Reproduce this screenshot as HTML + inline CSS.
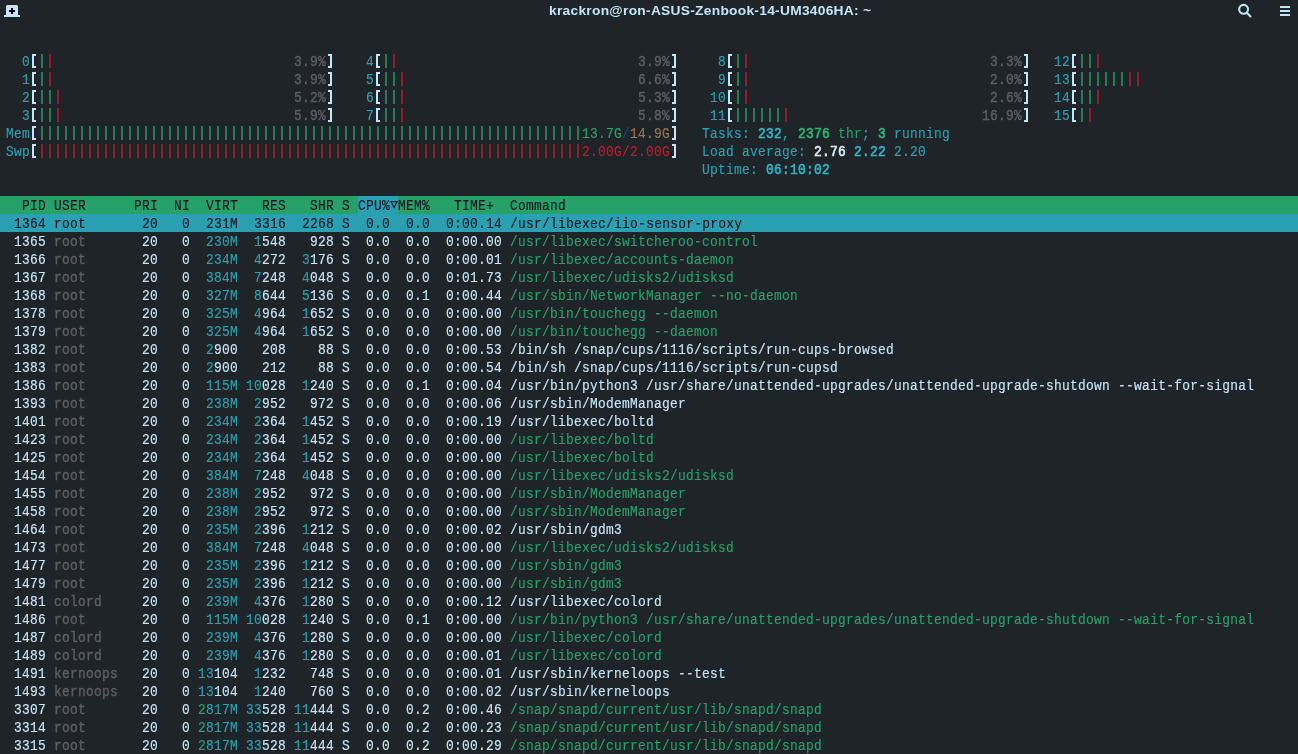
<!DOCTYPE html><html><head><meta charset="utf-8"><style>
html,body{margin:0;padding:0;}
body{width:1298px;height:754px;overflow:hidden;background:#1f2428;position:relative;}
.r{position:absolute;left:0;width:1298px;height:18px;}
.t{position:absolute;top:0;height:18px;line-height:18px;white-space:pre;font-family:"Liberation Mono",monospace;font-size:14px;letter-spacing:0.296px;transform:scaleX(0.92);transform-origin:0 0;-webkit-text-stroke-width:0.15px;}
.b{-webkit-text-stroke-width:0.6px;}
i{position:absolute;display:block;}
.g{-webkit-text-stroke-width:0.4px;}
.title{position:absolute;left:549px;top:1px;height:20px;line-height:20px;font-family:"Liberation Sans",sans-serif;font-weight:bold;font-size:13px;letter-spacing:0.25px;transform:scaleX(1.06);transform-origin:0 0;color:#c4e5f8;white-space:pre;}

</style></head><body><div style="position:absolute;left:0;top:0;width:1298px;height:754px;will-change:transform">
<svg style="position:absolute;left:0;top:0" width="24" height="24" viewBox="0 0 24 24">
<path d="M7.5 5 h9 a1.5 1.5 0 0 1 1.5 1.5 v8.5 h2 v2 h-16 v-2 h2 v-8.5 a1.5 1.5 0 0 1 1.5 -1.5 z" fill="#c4e5f8"/>
<path d="M11 8 h2 v2 h2 v2 h-2 v2 h-2 v-2 h-2 v-2 h2 z" fill="#000"/>
</svg>
<div class="title">krackron@ron-ASUS-Zenbook-14-UM3406HA: ~</div>
<svg style="position:absolute;left:1228px;top:0" width="30" height="24" viewBox="0 0 30 24">
<circle cx="15.6" cy="9.3" r="4.45" fill="none" stroke="#c4e5f8" stroke-width="2.1"/>
<line x1="18.6" y1="12.5" x2="23" y2="17" stroke="#c4e5f8" stroke-width="2.1"/>
</svg>
<svg style="position:absolute;left:1270px;top:0" width="28" height="24" viewBox="0 0 28 24">
<rect x="10" y="6" width="10" height="2" fill="#c4e5f8"/>
<rect x="10" y="10" width="10" height="2" fill="#c4e5f8"/>
<rect x="10" y="14" width="10" height="2" fill="#c4e5f8"/>
</svg>
<div class="r" style="top:52px;">
<i style="left:32px;top:2px;width:2px;height:14px;background:#c4e5f8"></i><i style="left:32px;top:2px;width:4px;height:2px;background:#c4e5f8"></i><i style="left:32px;top:14px;width:4px;height:2px;background:#c4e5f8"></i>
<i style="left:41px;top:2px;width:2px;height:14px;background:#247c55"></i>
<i style="left:49px;top:2px;width:2px;height:14px;background:#931e28"></i>
<i style="left:330px;top:2px;width:2px;height:14px;background:#c4e5f8"></i><i style="left:328px;top:2px;width:4px;height:2px;background:#c4e5f8"></i><i style="left:328px;top:14px;width:4px;height:2px;background:#c4e5f8"></i>
<i style="left:376px;top:2px;width:2px;height:14px;background:#c4e5f8"></i><i style="left:376px;top:2px;width:4px;height:2px;background:#c4e5f8"></i><i style="left:376px;top:14px;width:4px;height:2px;background:#c4e5f8"></i>
<i style="left:385px;top:2px;width:2px;height:14px;background:#247c55"></i>
<i style="left:393px;top:2px;width:2px;height:14px;background:#931e28"></i>
<i style="left:674px;top:2px;width:2px;height:14px;background:#c4e5f8"></i><i style="left:672px;top:2px;width:4px;height:2px;background:#c4e5f8"></i><i style="left:672px;top:14px;width:4px;height:2px;background:#c4e5f8"></i>
<i style="left:728px;top:2px;width:2px;height:14px;background:#c4e5f8"></i><i style="left:728px;top:2px;width:4px;height:2px;background:#c4e5f8"></i><i style="left:728px;top:14px;width:4px;height:2px;background:#c4e5f8"></i>
<i style="left:737px;top:2px;width:2px;height:14px;background:#247c55"></i>
<i style="left:745px;top:2px;width:2px;height:14px;background:#931e28"></i>
<i style="left:1026px;top:2px;width:2px;height:14px;background:#c4e5f8"></i><i style="left:1024px;top:2px;width:4px;height:2px;background:#c4e5f8"></i><i style="left:1024px;top:14px;width:4px;height:2px;background:#c4e5f8"></i>
<i style="left:1072px;top:2px;width:2px;height:14px;background:#c4e5f8"></i><i style="left:1072px;top:2px;width:4px;height:2px;background:#c4e5f8"></i><i style="left:1072px;top:14px;width:4px;height:2px;background:#c4e5f8"></i>
<i style="left:1081px;top:2px;width:2px;height:14px;background:#247c55"></i>
<i style="left:1089px;top:2px;width:2px;height:14px;background:#247c55"></i>
<i style="left:1097px;top:2px;width:2px;height:14px;background:#931e28"></i>
<div class="t" style="left:22px;top:1px;color:#2aa1b3">0</div>
<div class="t g" style="left:294px;top:1px;color:#5f5d65">3.9%</div>
<div class="t" style="left:366px;top:1px;color:#2aa1b3">4</div>
<div class="t g" style="left:638px;top:1px;color:#5f5d65">3.9%</div>
<div class="t" style="left:718px;top:1px;color:#2aa1b3">8</div>
<div class="t g" style="left:990px;top:1px;color:#5f5d65">3.3%</div>
<div class="t" style="left:1054px;top:1px;color:#2aa1b3">12</div>
</div>
<div class="r" style="top:70px;">
<i style="left:32px;top:2px;width:2px;height:14px;background:#c4e5f8"></i><i style="left:32px;top:2px;width:4px;height:2px;background:#c4e5f8"></i><i style="left:32px;top:14px;width:4px;height:2px;background:#c4e5f8"></i>
<i style="left:41px;top:2px;width:2px;height:14px;background:#247c55"></i>
<i style="left:49px;top:2px;width:2px;height:14px;background:#931e28"></i>
<i style="left:330px;top:2px;width:2px;height:14px;background:#c4e5f8"></i><i style="left:328px;top:2px;width:4px;height:2px;background:#c4e5f8"></i><i style="left:328px;top:14px;width:4px;height:2px;background:#c4e5f8"></i>
<i style="left:376px;top:2px;width:2px;height:14px;background:#c4e5f8"></i><i style="left:376px;top:2px;width:4px;height:2px;background:#c4e5f8"></i><i style="left:376px;top:14px;width:4px;height:2px;background:#c4e5f8"></i>
<i style="left:385px;top:2px;width:2px;height:14px;background:#247c55"></i>
<i style="left:393px;top:2px;width:2px;height:14px;background:#247c55"></i>
<i style="left:401px;top:2px;width:2px;height:14px;background:#931e28"></i>
<i style="left:674px;top:2px;width:2px;height:14px;background:#c4e5f8"></i><i style="left:672px;top:2px;width:4px;height:2px;background:#c4e5f8"></i><i style="left:672px;top:14px;width:4px;height:2px;background:#c4e5f8"></i>
<i style="left:728px;top:2px;width:2px;height:14px;background:#c4e5f8"></i><i style="left:728px;top:2px;width:4px;height:2px;background:#c4e5f8"></i><i style="left:728px;top:14px;width:4px;height:2px;background:#c4e5f8"></i>
<i style="left:737px;top:2px;width:2px;height:14px;background:#247c55"></i>
<i style="left:745px;top:2px;width:2px;height:14px;background:#931e28"></i>
<i style="left:1026px;top:2px;width:2px;height:14px;background:#c4e5f8"></i><i style="left:1024px;top:2px;width:4px;height:2px;background:#c4e5f8"></i><i style="left:1024px;top:14px;width:4px;height:2px;background:#c4e5f8"></i>
<i style="left:1072px;top:2px;width:2px;height:14px;background:#c4e5f8"></i><i style="left:1072px;top:2px;width:4px;height:2px;background:#c4e5f8"></i><i style="left:1072px;top:14px;width:4px;height:2px;background:#c4e5f8"></i>
<i style="left:1081px;top:2px;width:2px;height:14px;background:#247c55"></i>
<i style="left:1089px;top:2px;width:2px;height:14px;background:#247c55"></i>
<i style="left:1097px;top:2px;width:2px;height:14px;background:#247c55"></i>
<i style="left:1105px;top:2px;width:2px;height:14px;background:#247c55"></i>
<i style="left:1113px;top:2px;width:2px;height:14px;background:#247c55"></i>
<i style="left:1121px;top:2px;width:2px;height:14px;background:#247c55"></i>
<i style="left:1129px;top:2px;width:2px;height:14px;background:#931e28"></i>
<i style="left:1137px;top:2px;width:2px;height:14px;background:#931e28"></i>
<div class="t" style="left:22px;top:1px;color:#2aa1b3">1</div>
<div class="t g" style="left:294px;top:1px;color:#5f5d65">3.9%</div>
<div class="t" style="left:366px;top:1px;color:#2aa1b3">5</div>
<div class="t g" style="left:638px;top:1px;color:#5f5d65">6.6%</div>
<div class="t" style="left:718px;top:1px;color:#2aa1b3">9</div>
<div class="t g" style="left:990px;top:1px;color:#5f5d65">2.0%</div>
<div class="t" style="left:1054px;top:1px;color:#2aa1b3">13</div>
</div>
<div class="r" style="top:88px;">
<i style="left:32px;top:2px;width:2px;height:14px;background:#c4e5f8"></i><i style="left:32px;top:2px;width:4px;height:2px;background:#c4e5f8"></i><i style="left:32px;top:14px;width:4px;height:2px;background:#c4e5f8"></i>
<i style="left:41px;top:2px;width:2px;height:14px;background:#247c55"></i>
<i style="left:49px;top:2px;width:2px;height:14px;background:#247c55"></i>
<i style="left:57px;top:2px;width:2px;height:14px;background:#931e28"></i>
<i style="left:330px;top:2px;width:2px;height:14px;background:#c4e5f8"></i><i style="left:328px;top:2px;width:4px;height:2px;background:#c4e5f8"></i><i style="left:328px;top:14px;width:4px;height:2px;background:#c4e5f8"></i>
<i style="left:376px;top:2px;width:2px;height:14px;background:#c4e5f8"></i><i style="left:376px;top:2px;width:4px;height:2px;background:#c4e5f8"></i><i style="left:376px;top:14px;width:4px;height:2px;background:#c4e5f8"></i>
<i style="left:385px;top:2px;width:2px;height:14px;background:#247c55"></i>
<i style="left:393px;top:2px;width:2px;height:14px;background:#247c55"></i>
<i style="left:401px;top:2px;width:2px;height:14px;background:#931e28"></i>
<i style="left:674px;top:2px;width:2px;height:14px;background:#c4e5f8"></i><i style="left:672px;top:2px;width:4px;height:2px;background:#c4e5f8"></i><i style="left:672px;top:14px;width:4px;height:2px;background:#c4e5f8"></i>
<i style="left:728px;top:2px;width:2px;height:14px;background:#c4e5f8"></i><i style="left:728px;top:2px;width:4px;height:2px;background:#c4e5f8"></i><i style="left:728px;top:14px;width:4px;height:2px;background:#c4e5f8"></i>
<i style="left:737px;top:2px;width:2px;height:14px;background:#247c55"></i>
<i style="left:745px;top:2px;width:2px;height:14px;background:#931e28"></i>
<i style="left:1026px;top:2px;width:2px;height:14px;background:#c4e5f8"></i><i style="left:1024px;top:2px;width:4px;height:2px;background:#c4e5f8"></i><i style="left:1024px;top:14px;width:4px;height:2px;background:#c4e5f8"></i>
<i style="left:1072px;top:2px;width:2px;height:14px;background:#c4e5f8"></i><i style="left:1072px;top:2px;width:4px;height:2px;background:#c4e5f8"></i><i style="left:1072px;top:14px;width:4px;height:2px;background:#c4e5f8"></i>
<i style="left:1081px;top:2px;width:2px;height:14px;background:#247c55"></i>
<i style="left:1089px;top:2px;width:2px;height:14px;background:#247c55"></i>
<i style="left:1097px;top:2px;width:2px;height:14px;background:#931e28"></i>
<div class="t" style="left:22px;top:1px;color:#2aa1b3">2</div>
<div class="t g" style="left:294px;top:1px;color:#5f5d65">5.2%</div>
<div class="t" style="left:366px;top:1px;color:#2aa1b3">6</div>
<div class="t g" style="left:638px;top:1px;color:#5f5d65">5.3%</div>
<div class="t" style="left:710px;top:1px;color:#2aa1b3">10</div>
<div class="t g" style="left:990px;top:1px;color:#5f5d65">2.6%</div>
<div class="t" style="left:1054px;top:1px;color:#2aa1b3">14</div>
</div>
<div class="r" style="top:106px;">
<i style="left:32px;top:2px;width:2px;height:14px;background:#c4e5f8"></i><i style="left:32px;top:2px;width:4px;height:2px;background:#c4e5f8"></i><i style="left:32px;top:14px;width:4px;height:2px;background:#c4e5f8"></i>
<i style="left:41px;top:2px;width:2px;height:14px;background:#247c55"></i>
<i style="left:49px;top:2px;width:2px;height:14px;background:#247c55"></i>
<i style="left:57px;top:2px;width:2px;height:14px;background:#931e28"></i>
<i style="left:330px;top:2px;width:2px;height:14px;background:#c4e5f8"></i><i style="left:328px;top:2px;width:4px;height:2px;background:#c4e5f8"></i><i style="left:328px;top:14px;width:4px;height:2px;background:#c4e5f8"></i>
<i style="left:376px;top:2px;width:2px;height:14px;background:#c4e5f8"></i><i style="left:376px;top:2px;width:4px;height:2px;background:#c4e5f8"></i><i style="left:376px;top:14px;width:4px;height:2px;background:#c4e5f8"></i>
<i style="left:385px;top:2px;width:2px;height:14px;background:#247c55"></i>
<i style="left:393px;top:2px;width:2px;height:14px;background:#247c55"></i>
<i style="left:401px;top:2px;width:2px;height:14px;background:#931e28"></i>
<i style="left:674px;top:2px;width:2px;height:14px;background:#c4e5f8"></i><i style="left:672px;top:2px;width:4px;height:2px;background:#c4e5f8"></i><i style="left:672px;top:14px;width:4px;height:2px;background:#c4e5f8"></i>
<i style="left:728px;top:2px;width:2px;height:14px;background:#c4e5f8"></i><i style="left:728px;top:2px;width:4px;height:2px;background:#c4e5f8"></i><i style="left:728px;top:14px;width:4px;height:2px;background:#c4e5f8"></i>
<i style="left:737px;top:2px;width:2px;height:14px;background:#247c55"></i>
<i style="left:745px;top:2px;width:2px;height:14px;background:#247c55"></i>
<i style="left:753px;top:2px;width:2px;height:14px;background:#247c55"></i>
<i style="left:761px;top:2px;width:2px;height:14px;background:#247c55"></i>
<i style="left:769px;top:2px;width:2px;height:14px;background:#247c55"></i>
<i style="left:777px;top:2px;width:2px;height:14px;background:#247c55"></i>
<i style="left:785px;top:2px;width:2px;height:14px;background:#931e28"></i>
<i style="left:1026px;top:2px;width:2px;height:14px;background:#c4e5f8"></i><i style="left:1024px;top:2px;width:4px;height:2px;background:#c4e5f8"></i><i style="left:1024px;top:14px;width:4px;height:2px;background:#c4e5f8"></i>
<i style="left:1072px;top:2px;width:2px;height:14px;background:#c4e5f8"></i><i style="left:1072px;top:2px;width:4px;height:2px;background:#c4e5f8"></i><i style="left:1072px;top:14px;width:4px;height:2px;background:#c4e5f8"></i>
<i style="left:1081px;top:2px;width:2px;height:14px;background:#247c55"></i>
<i style="left:1089px;top:2px;width:2px;height:14px;background:#931e28"></i>
<div class="t" style="left:22px;top:1px;color:#2aa1b3">3</div>
<div class="t g" style="left:294px;top:1px;color:#5f5d65">5.9%</div>
<div class="t" style="left:366px;top:1px;color:#2aa1b3">7</div>
<div class="t g" style="left:638px;top:1px;color:#5f5d65">5.8%</div>
<div class="t" style="left:710px;top:1px;color:#2aa1b3">11</div>
<div class="t g" style="left:982px;top:1px;color:#5f5d65">16.9%</div>
<div class="t" style="left:1054px;top:1px;color:#2aa1b3">15</div>
</div>
<div class="r" style="top:124px;">
<i style="left:32px;top:2px;width:2px;height:14px;background:#c4e5f8"></i><i style="left:32px;top:2px;width:4px;height:2px;background:#c4e5f8"></i><i style="left:32px;top:14px;width:4px;height:2px;background:#c4e5f8"></i>
<i style="left:41px;top:2px;width:2px;height:14px;background:#247c55"></i>
<i style="left:49px;top:2px;width:2px;height:14px;background:#247c55"></i>
<i style="left:57px;top:2px;width:2px;height:14px;background:#247c55"></i>
<i style="left:65px;top:2px;width:2px;height:14px;background:#247c55"></i>
<i style="left:73px;top:2px;width:2px;height:14px;background:#247c55"></i>
<i style="left:81px;top:2px;width:2px;height:14px;background:#247c55"></i>
<i style="left:89px;top:2px;width:2px;height:14px;background:#247c55"></i>
<i style="left:97px;top:2px;width:2px;height:14px;background:#247c55"></i>
<i style="left:105px;top:2px;width:2px;height:14px;background:#247c55"></i>
<i style="left:113px;top:2px;width:2px;height:14px;background:#247c55"></i>
<i style="left:121px;top:2px;width:2px;height:14px;background:#247c55"></i>
<i style="left:129px;top:2px;width:2px;height:14px;background:#247c55"></i>
<i style="left:137px;top:2px;width:2px;height:14px;background:#247c55"></i>
<i style="left:145px;top:2px;width:2px;height:14px;background:#247c55"></i>
<i style="left:153px;top:2px;width:2px;height:14px;background:#247c55"></i>
<i style="left:161px;top:2px;width:2px;height:14px;background:#247c55"></i>
<i style="left:169px;top:2px;width:2px;height:14px;background:#247c55"></i>
<i style="left:177px;top:2px;width:2px;height:14px;background:#247c55"></i>
<i style="left:185px;top:2px;width:2px;height:14px;background:#247c55"></i>
<i style="left:193px;top:2px;width:2px;height:14px;background:#247c55"></i>
<i style="left:201px;top:2px;width:2px;height:14px;background:#247c55"></i>
<i style="left:209px;top:2px;width:2px;height:14px;background:#247c55"></i>
<i style="left:217px;top:2px;width:2px;height:14px;background:#247c55"></i>
<i style="left:225px;top:2px;width:2px;height:14px;background:#247c55"></i>
<i style="left:233px;top:2px;width:2px;height:14px;background:#247c55"></i>
<i style="left:241px;top:2px;width:2px;height:14px;background:#247c55"></i>
<i style="left:249px;top:2px;width:2px;height:14px;background:#247c55"></i>
<i style="left:257px;top:2px;width:2px;height:14px;background:#247c55"></i>
<i style="left:265px;top:2px;width:2px;height:14px;background:#247c55"></i>
<i style="left:273px;top:2px;width:2px;height:14px;background:#247c55"></i>
<i style="left:281px;top:2px;width:2px;height:14px;background:#247c55"></i>
<i style="left:289px;top:2px;width:2px;height:14px;background:#247c55"></i>
<i style="left:297px;top:2px;width:2px;height:14px;background:#247c55"></i>
<i style="left:305px;top:2px;width:2px;height:14px;background:#247c55"></i>
<i style="left:313px;top:2px;width:2px;height:14px;background:#247c55"></i>
<i style="left:321px;top:2px;width:2px;height:14px;background:#247c55"></i>
<i style="left:329px;top:2px;width:2px;height:14px;background:#247c55"></i>
<i style="left:337px;top:2px;width:2px;height:14px;background:#247c55"></i>
<i style="left:345px;top:2px;width:2px;height:14px;background:#247c55"></i>
<i style="left:353px;top:2px;width:2px;height:14px;background:#247c55"></i>
<i style="left:361px;top:2px;width:2px;height:14px;background:#247c55"></i>
<i style="left:369px;top:2px;width:2px;height:14px;background:#247c55"></i>
<i style="left:377px;top:2px;width:2px;height:14px;background:#247c55"></i>
<i style="left:385px;top:2px;width:2px;height:14px;background:#247c55"></i>
<i style="left:393px;top:2px;width:2px;height:14px;background:#247c55"></i>
<i style="left:401px;top:2px;width:2px;height:14px;background:#247c55"></i>
<i style="left:409px;top:2px;width:2px;height:14px;background:#247c55"></i>
<i style="left:417px;top:2px;width:2px;height:14px;background:#247c55"></i>
<i style="left:425px;top:2px;width:2px;height:14px;background:#247c55"></i>
<i style="left:433px;top:2px;width:2px;height:14px;background:#247c55"></i>
<i style="left:441px;top:2px;width:2px;height:14px;background:#247c55"></i>
<i style="left:449px;top:2px;width:2px;height:14px;background:#247c55"></i>
<i style="left:457px;top:2px;width:2px;height:14px;background:#247c55"></i>
<i style="left:465px;top:2px;width:2px;height:14px;background:#247c55"></i>
<i style="left:473px;top:2px;width:2px;height:14px;background:#247c55"></i>
<i style="left:481px;top:2px;width:2px;height:14px;background:#247c55"></i>
<i style="left:489px;top:2px;width:2px;height:14px;background:#247c55"></i>
<i style="left:497px;top:2px;width:2px;height:14px;background:#247c55"></i>
<i style="left:505px;top:2px;width:2px;height:14px;background:#247c55"></i>
<i style="left:513px;top:2px;width:2px;height:14px;background:#247c55"></i>
<i style="left:521px;top:2px;width:2px;height:14px;background:#247c55"></i>
<i style="left:529px;top:2px;width:2px;height:14px;background:#247c55"></i>
<i style="left:537px;top:2px;width:2px;height:14px;background:#247c55"></i>
<i style="left:545px;top:2px;width:2px;height:14px;background:#247c55"></i>
<i style="left:553px;top:2px;width:2px;height:14px;background:#247c55"></i>
<i style="left:561px;top:2px;width:2px;height:14px;background:#247c55"></i>
<i style="left:569px;top:2px;width:2px;height:14px;background:#247c55"></i>
<i style="left:577px;top:2px;width:2px;height:14px;background:#247c55"></i>
<i style="left:674px;top:2px;width:2px;height:14px;background:#c4e5f8"></i><i style="left:672px;top:2px;width:4px;height:2px;background:#c4e5f8"></i><i style="left:672px;top:14px;width:4px;height:2px;background:#c4e5f8"></i>
<div class="t" style="left:6px;top:1px;color:#2aa1b3">Mem</div>
<div class="t" style="left:582px;top:1px;color:#26a269">13.7G</div>
<div class="t" style="left:622px;top:1px;color:#12488b">/</div>
<div class="t" style="left:630px;top:1px;color:#a2734c">14.9G</div>
<div class="t" style="left:702px;top:1px;color:#2aa1b3">Tasks: </div>
<div class="t b" style="left:758px;top:1px;color:#30b4c8">232</div>
<div class="t" style="left:782px;top:1px;color:#2aa1b3">, </div>
<div class="t b" style="left:798px;top:1px;color:#2cb872">2376</div>
<div class="t" style="left:830px;top:1px;color:#26a269"> thr</div>
<div class="t" style="left:862px;top:1px;color:#2aa1b3">; </div>
<div class="t b" style="left:878px;top:1px;color:#2cb872">3</div>
<div class="t" style="left:886px;top:1px;color:#2aa1b3"> running</div>
</div>
<div class="r" style="top:142px;">
<i style="left:32px;top:2px;width:2px;height:14px;background:#c4e5f8"></i><i style="left:32px;top:2px;width:4px;height:2px;background:#c4e5f8"></i><i style="left:32px;top:14px;width:4px;height:2px;background:#c4e5f8"></i>
<i style="left:41px;top:2px;width:2px;height:14px;background:#931e28"></i>
<i style="left:49px;top:2px;width:2px;height:14px;background:#931e28"></i>
<i style="left:57px;top:2px;width:2px;height:14px;background:#931e28"></i>
<i style="left:65px;top:2px;width:2px;height:14px;background:#931e28"></i>
<i style="left:73px;top:2px;width:2px;height:14px;background:#931e28"></i>
<i style="left:81px;top:2px;width:2px;height:14px;background:#931e28"></i>
<i style="left:89px;top:2px;width:2px;height:14px;background:#931e28"></i>
<i style="left:97px;top:2px;width:2px;height:14px;background:#931e28"></i>
<i style="left:105px;top:2px;width:2px;height:14px;background:#931e28"></i>
<i style="left:113px;top:2px;width:2px;height:14px;background:#931e28"></i>
<i style="left:121px;top:2px;width:2px;height:14px;background:#931e28"></i>
<i style="left:129px;top:2px;width:2px;height:14px;background:#931e28"></i>
<i style="left:137px;top:2px;width:2px;height:14px;background:#931e28"></i>
<i style="left:145px;top:2px;width:2px;height:14px;background:#931e28"></i>
<i style="left:153px;top:2px;width:2px;height:14px;background:#931e28"></i>
<i style="left:161px;top:2px;width:2px;height:14px;background:#931e28"></i>
<i style="left:169px;top:2px;width:2px;height:14px;background:#931e28"></i>
<i style="left:177px;top:2px;width:2px;height:14px;background:#931e28"></i>
<i style="left:185px;top:2px;width:2px;height:14px;background:#931e28"></i>
<i style="left:193px;top:2px;width:2px;height:14px;background:#931e28"></i>
<i style="left:201px;top:2px;width:2px;height:14px;background:#931e28"></i>
<i style="left:209px;top:2px;width:2px;height:14px;background:#931e28"></i>
<i style="left:217px;top:2px;width:2px;height:14px;background:#931e28"></i>
<i style="left:225px;top:2px;width:2px;height:14px;background:#931e28"></i>
<i style="left:233px;top:2px;width:2px;height:14px;background:#931e28"></i>
<i style="left:241px;top:2px;width:2px;height:14px;background:#931e28"></i>
<i style="left:249px;top:2px;width:2px;height:14px;background:#931e28"></i>
<i style="left:257px;top:2px;width:2px;height:14px;background:#931e28"></i>
<i style="left:265px;top:2px;width:2px;height:14px;background:#931e28"></i>
<i style="left:273px;top:2px;width:2px;height:14px;background:#931e28"></i>
<i style="left:281px;top:2px;width:2px;height:14px;background:#931e28"></i>
<i style="left:289px;top:2px;width:2px;height:14px;background:#931e28"></i>
<i style="left:297px;top:2px;width:2px;height:14px;background:#931e28"></i>
<i style="left:305px;top:2px;width:2px;height:14px;background:#931e28"></i>
<i style="left:313px;top:2px;width:2px;height:14px;background:#931e28"></i>
<i style="left:321px;top:2px;width:2px;height:14px;background:#931e28"></i>
<i style="left:329px;top:2px;width:2px;height:14px;background:#931e28"></i>
<i style="left:337px;top:2px;width:2px;height:14px;background:#931e28"></i>
<i style="left:345px;top:2px;width:2px;height:14px;background:#931e28"></i>
<i style="left:353px;top:2px;width:2px;height:14px;background:#931e28"></i>
<i style="left:361px;top:2px;width:2px;height:14px;background:#931e28"></i>
<i style="left:369px;top:2px;width:2px;height:14px;background:#931e28"></i>
<i style="left:377px;top:2px;width:2px;height:14px;background:#931e28"></i>
<i style="left:385px;top:2px;width:2px;height:14px;background:#931e28"></i>
<i style="left:393px;top:2px;width:2px;height:14px;background:#931e28"></i>
<i style="left:401px;top:2px;width:2px;height:14px;background:#931e28"></i>
<i style="left:409px;top:2px;width:2px;height:14px;background:#931e28"></i>
<i style="left:417px;top:2px;width:2px;height:14px;background:#931e28"></i>
<i style="left:425px;top:2px;width:2px;height:14px;background:#931e28"></i>
<i style="left:433px;top:2px;width:2px;height:14px;background:#931e28"></i>
<i style="left:441px;top:2px;width:2px;height:14px;background:#931e28"></i>
<i style="left:449px;top:2px;width:2px;height:14px;background:#931e28"></i>
<i style="left:457px;top:2px;width:2px;height:14px;background:#931e28"></i>
<i style="left:465px;top:2px;width:2px;height:14px;background:#931e28"></i>
<i style="left:473px;top:2px;width:2px;height:14px;background:#931e28"></i>
<i style="left:481px;top:2px;width:2px;height:14px;background:#931e28"></i>
<i style="left:489px;top:2px;width:2px;height:14px;background:#931e28"></i>
<i style="left:497px;top:2px;width:2px;height:14px;background:#931e28"></i>
<i style="left:505px;top:2px;width:2px;height:14px;background:#931e28"></i>
<i style="left:513px;top:2px;width:2px;height:14px;background:#931e28"></i>
<i style="left:521px;top:2px;width:2px;height:14px;background:#931e28"></i>
<i style="left:529px;top:2px;width:2px;height:14px;background:#931e28"></i>
<i style="left:537px;top:2px;width:2px;height:14px;background:#931e28"></i>
<i style="left:545px;top:2px;width:2px;height:14px;background:#931e28"></i>
<i style="left:553px;top:2px;width:2px;height:14px;background:#931e28"></i>
<i style="left:561px;top:2px;width:2px;height:14px;background:#931e28"></i>
<i style="left:569px;top:2px;width:2px;height:14px;background:#931e28"></i>
<i style="left:577px;top:2px;width:2px;height:14px;background:#931e28"></i>
<i style="left:674px;top:2px;width:2px;height:14px;background:#c4e5f8"></i><i style="left:672px;top:2px;width:4px;height:2px;background:#c4e5f8"></i><i style="left:672px;top:14px;width:4px;height:2px;background:#c4e5f8"></i>
<div class="t" style="left:6px;top:1px;color:#2aa1b3">Swp</div>
<div class="t" style="left:582px;top:1px;color:#c01c28">2.00G/2.00G</div>
<div class="t" style="left:702px;top:1px;color:#2aa1b3">Load average: </div>
<div class="t b" style="left:814px;top:1px;color:#dcf0fb">2.76 </div>
<div class="t b" style="left:854px;top:1px;color:#30b4c8">2.22 </div>
<div class="t" style="left:894px;top:1px;color:#2aa1b3">2.20</div>
</div>
<div class="r" style="top:160px;">
<div class="t" style="left:702px;top:1px;color:#2aa1b3">Uptime: </div>
<div class="t b" style="left:766px;top:1px;color:#30b4c8">06:10:02</div>
</div>
<div class="r" style="top:196px;background:#26a269;">
<div style="position:absolute;left:358px;top:0;width:40px;height:18px;background:#2aa1b3"></div>
<svg style="position:absolute;left:388px;top:3px" width="12" height="12" viewBox="0 0 12 12"><path d="M2.9 2.6 H9.2 L6.05 8.6 Z" fill="none" stroke="#171421" stroke-width="1.1" stroke-linejoin="miter"/></svg>
<div class="t" style="left:6px;top:1px;color:#171421">  PID USER      PRI  NI  VIRT   RES   SHR S </div>
<div class="t" style="left:358px;top:1px;color:#171421">CPU% </div>
<div class="t" style="left:398px;top:1px;color:#171421">MEM%   TIME+  Command</div>
</div>
<div class="r" style="top:214px;background:#2aa1b3;">
<div class="t" style="left:6px;top:1px;color:#171421"> 1364 root       20   0  231M  3316  2268 S  0.0  0.0  0:00.14 /usr/libexec/iio-sensor-proxy</div>
</div>
<div class="r" style="top:232px;">
<div class="t" style="left:6px;top:1px;color:#c4e5f8"> 1365</div>
<div class="t g" style="left:54px;top:1px;color:#5f5d65">root</div>
<div class="t" style="left:134px;top:1px;color:#c4e5f8"> 20</div>
<div class="t" style="left:166px;top:1px;color:#c4e5f8">  0</div>
<div class="t" style="left:206px;top:1px;color:#2aa1b3">230M</div>
<div class="t" style="left:254px;top:1px;color:#2aa1b3">1</div>
<div class="t" style="left:262px;top:1px;color:#c4e5f8">548</div>
<div class="t" style="left:310px;top:1px;color:#c4e5f8">928</div>
<div class="t" style="left:342px;top:1px;color:#c4e5f8">S</div>
<div class="t" style="left:366px;top:1px;color:#c4e5f8">0.0</div>
<div class="t" style="left:406px;top:1px;color:#c4e5f8">0.0</div>
<div class="t" style="left:446px;top:1px;color:#c4e5f8">0:00.00</div>
<div class="t" style="left:510px;top:1px;color:#26a269">/usr/libexec/switcheroo-control</div>
</div>
<div class="r" style="top:250px;">
<div class="t" style="left:6px;top:1px;color:#c4e5f8"> 1366</div>
<div class="t g" style="left:54px;top:1px;color:#5f5d65">root</div>
<div class="t" style="left:134px;top:1px;color:#c4e5f8"> 20</div>
<div class="t" style="left:166px;top:1px;color:#c4e5f8">  0</div>
<div class="t" style="left:206px;top:1px;color:#2aa1b3">234M</div>
<div class="t" style="left:254px;top:1px;color:#2aa1b3">4</div>
<div class="t" style="left:262px;top:1px;color:#c4e5f8">272</div>
<div class="t" style="left:302px;top:1px;color:#2aa1b3">3</div>
<div class="t" style="left:310px;top:1px;color:#c4e5f8">176</div>
<div class="t" style="left:342px;top:1px;color:#c4e5f8">S</div>
<div class="t" style="left:366px;top:1px;color:#c4e5f8">0.0</div>
<div class="t" style="left:406px;top:1px;color:#c4e5f8">0.0</div>
<div class="t" style="left:446px;top:1px;color:#c4e5f8">0:00.01</div>
<div class="t" style="left:510px;top:1px;color:#26a269">/usr/libexec/accounts-daemon</div>
</div>
<div class="r" style="top:268px;">
<div class="t" style="left:6px;top:1px;color:#c4e5f8"> 1367</div>
<div class="t g" style="left:54px;top:1px;color:#5f5d65">root</div>
<div class="t" style="left:134px;top:1px;color:#c4e5f8"> 20</div>
<div class="t" style="left:166px;top:1px;color:#c4e5f8">  0</div>
<div class="t" style="left:206px;top:1px;color:#2aa1b3">384M</div>
<div class="t" style="left:254px;top:1px;color:#2aa1b3">7</div>
<div class="t" style="left:262px;top:1px;color:#c4e5f8">248</div>
<div class="t" style="left:302px;top:1px;color:#2aa1b3">4</div>
<div class="t" style="left:310px;top:1px;color:#c4e5f8">048</div>
<div class="t" style="left:342px;top:1px;color:#c4e5f8">S</div>
<div class="t" style="left:366px;top:1px;color:#c4e5f8">0.0</div>
<div class="t" style="left:406px;top:1px;color:#c4e5f8">0.0</div>
<div class="t" style="left:446px;top:1px;color:#c4e5f8">0:01.73</div>
<div class="t" style="left:510px;top:1px;color:#26a269">/usr/libexec/udisks2/udisksd</div>
</div>
<div class="r" style="top:286px;">
<div class="t" style="left:6px;top:1px;color:#c4e5f8"> 1368</div>
<div class="t g" style="left:54px;top:1px;color:#5f5d65">root</div>
<div class="t" style="left:134px;top:1px;color:#c4e5f8"> 20</div>
<div class="t" style="left:166px;top:1px;color:#c4e5f8">  0</div>
<div class="t" style="left:206px;top:1px;color:#2aa1b3">327M</div>
<div class="t" style="left:254px;top:1px;color:#2aa1b3">8</div>
<div class="t" style="left:262px;top:1px;color:#c4e5f8">644</div>
<div class="t" style="left:302px;top:1px;color:#2aa1b3">5</div>
<div class="t" style="left:310px;top:1px;color:#c4e5f8">136</div>
<div class="t" style="left:342px;top:1px;color:#c4e5f8">S</div>
<div class="t" style="left:366px;top:1px;color:#c4e5f8">0.0</div>
<div class="t" style="left:406px;top:1px;color:#c4e5f8">0.1</div>
<div class="t" style="left:446px;top:1px;color:#c4e5f8">0:00.44</div>
<div class="t" style="left:510px;top:1px;color:#26a269">/usr/sbin/NetworkManager --no-daemon</div>
</div>
<div class="r" style="top:304px;">
<div class="t" style="left:6px;top:1px;color:#c4e5f8"> 1378</div>
<div class="t g" style="left:54px;top:1px;color:#5f5d65">root</div>
<div class="t" style="left:134px;top:1px;color:#c4e5f8"> 20</div>
<div class="t" style="left:166px;top:1px;color:#c4e5f8">  0</div>
<div class="t" style="left:206px;top:1px;color:#2aa1b3">325M</div>
<div class="t" style="left:254px;top:1px;color:#2aa1b3">4</div>
<div class="t" style="left:262px;top:1px;color:#c4e5f8">964</div>
<div class="t" style="left:302px;top:1px;color:#2aa1b3">1</div>
<div class="t" style="left:310px;top:1px;color:#c4e5f8">652</div>
<div class="t" style="left:342px;top:1px;color:#c4e5f8">S</div>
<div class="t" style="left:366px;top:1px;color:#c4e5f8">0.0</div>
<div class="t" style="left:406px;top:1px;color:#c4e5f8">0.0</div>
<div class="t" style="left:446px;top:1px;color:#c4e5f8">0:00.00</div>
<div class="t" style="left:510px;top:1px;color:#26a269">/usr/bin/touchegg --daemon</div>
</div>
<div class="r" style="top:322px;">
<div class="t" style="left:6px;top:1px;color:#c4e5f8"> 1379</div>
<div class="t g" style="left:54px;top:1px;color:#5f5d65">root</div>
<div class="t" style="left:134px;top:1px;color:#c4e5f8"> 20</div>
<div class="t" style="left:166px;top:1px;color:#c4e5f8">  0</div>
<div class="t" style="left:206px;top:1px;color:#2aa1b3">325M</div>
<div class="t" style="left:254px;top:1px;color:#2aa1b3">4</div>
<div class="t" style="left:262px;top:1px;color:#c4e5f8">964</div>
<div class="t" style="left:302px;top:1px;color:#2aa1b3">1</div>
<div class="t" style="left:310px;top:1px;color:#c4e5f8">652</div>
<div class="t" style="left:342px;top:1px;color:#c4e5f8">S</div>
<div class="t" style="left:366px;top:1px;color:#c4e5f8">0.0</div>
<div class="t" style="left:406px;top:1px;color:#c4e5f8">0.0</div>
<div class="t" style="left:446px;top:1px;color:#c4e5f8">0:00.00</div>
<div class="t" style="left:510px;top:1px;color:#26a269">/usr/bin/touchegg --daemon</div>
</div>
<div class="r" style="top:340px;">
<div class="t" style="left:6px;top:1px;color:#c4e5f8"> 1382</div>
<div class="t g" style="left:54px;top:1px;color:#5f5d65">root</div>
<div class="t" style="left:134px;top:1px;color:#c4e5f8"> 20</div>
<div class="t" style="left:166px;top:1px;color:#c4e5f8">  0</div>
<div class="t" style="left:206px;top:1px;color:#2aa1b3">2</div>
<div class="t" style="left:214px;top:1px;color:#c4e5f8">900</div>
<div class="t" style="left:262px;top:1px;color:#c4e5f8">208</div>
<div class="t" style="left:318px;top:1px;color:#c4e5f8">88</div>
<div class="t" style="left:342px;top:1px;color:#c4e5f8">S</div>
<div class="t" style="left:366px;top:1px;color:#c4e5f8">0.0</div>
<div class="t" style="left:406px;top:1px;color:#c4e5f8">0.0</div>
<div class="t" style="left:446px;top:1px;color:#c4e5f8">0:00.53</div>
<div class="t" style="left:510px;top:1px;color:#c4e5f8">/bin/sh /snap/cups/1116/scripts/run-cups-browsed</div>
</div>
<div class="r" style="top:358px;">
<div class="t" style="left:6px;top:1px;color:#c4e5f8"> 1383</div>
<div class="t g" style="left:54px;top:1px;color:#5f5d65">root</div>
<div class="t" style="left:134px;top:1px;color:#c4e5f8"> 20</div>
<div class="t" style="left:166px;top:1px;color:#c4e5f8">  0</div>
<div class="t" style="left:206px;top:1px;color:#2aa1b3">2</div>
<div class="t" style="left:214px;top:1px;color:#c4e5f8">900</div>
<div class="t" style="left:262px;top:1px;color:#c4e5f8">212</div>
<div class="t" style="left:318px;top:1px;color:#c4e5f8">88</div>
<div class="t" style="left:342px;top:1px;color:#c4e5f8">S</div>
<div class="t" style="left:366px;top:1px;color:#c4e5f8">0.0</div>
<div class="t" style="left:406px;top:1px;color:#c4e5f8">0.0</div>
<div class="t" style="left:446px;top:1px;color:#c4e5f8">0:00.54</div>
<div class="t" style="left:510px;top:1px;color:#c4e5f8">/bin/sh /snap/cups/1116/scripts/run-cupsd</div>
</div>
<div class="r" style="top:376px;">
<div class="t" style="left:6px;top:1px;color:#c4e5f8"> 1386</div>
<div class="t g" style="left:54px;top:1px;color:#5f5d65">root</div>
<div class="t" style="left:134px;top:1px;color:#c4e5f8"> 20</div>
<div class="t" style="left:166px;top:1px;color:#c4e5f8">  0</div>
<div class="t" style="left:206px;top:1px;color:#2aa1b3">115M</div>
<div class="t" style="left:246px;top:1px;color:#2aa1b3">10</div>
<div class="t" style="left:262px;top:1px;color:#c4e5f8">028</div>
<div class="t" style="left:302px;top:1px;color:#2aa1b3">1</div>
<div class="t" style="left:310px;top:1px;color:#c4e5f8">240</div>
<div class="t" style="left:342px;top:1px;color:#c4e5f8">S</div>
<div class="t" style="left:366px;top:1px;color:#c4e5f8">0.0</div>
<div class="t" style="left:406px;top:1px;color:#c4e5f8">0.1</div>
<div class="t" style="left:446px;top:1px;color:#c4e5f8">0:00.04</div>
<div class="t" style="left:510px;top:1px;color:#c4e5f8">/usr/bin/python3 /usr/share/unattended-upgrades/unattended-upgrade-shutdown --wait-for-signal</div>
</div>
<div class="r" style="top:394px;">
<div class="t" style="left:6px;top:1px;color:#c4e5f8"> 1393</div>
<div class="t g" style="left:54px;top:1px;color:#5f5d65">root</div>
<div class="t" style="left:134px;top:1px;color:#c4e5f8"> 20</div>
<div class="t" style="left:166px;top:1px;color:#c4e5f8">  0</div>
<div class="t" style="left:206px;top:1px;color:#2aa1b3">238M</div>
<div class="t" style="left:254px;top:1px;color:#2aa1b3">2</div>
<div class="t" style="left:262px;top:1px;color:#c4e5f8">952</div>
<div class="t" style="left:310px;top:1px;color:#c4e5f8">972</div>
<div class="t" style="left:342px;top:1px;color:#c4e5f8">S</div>
<div class="t" style="left:366px;top:1px;color:#c4e5f8">0.0</div>
<div class="t" style="left:406px;top:1px;color:#c4e5f8">0.0</div>
<div class="t" style="left:446px;top:1px;color:#c4e5f8">0:00.06</div>
<div class="t" style="left:510px;top:1px;color:#c4e5f8">/usr/sbin/ModemManager</div>
</div>
<div class="r" style="top:412px;">
<div class="t" style="left:6px;top:1px;color:#c4e5f8"> 1401</div>
<div class="t g" style="left:54px;top:1px;color:#5f5d65">root</div>
<div class="t" style="left:134px;top:1px;color:#c4e5f8"> 20</div>
<div class="t" style="left:166px;top:1px;color:#c4e5f8">  0</div>
<div class="t" style="left:206px;top:1px;color:#2aa1b3">234M</div>
<div class="t" style="left:254px;top:1px;color:#2aa1b3">2</div>
<div class="t" style="left:262px;top:1px;color:#c4e5f8">364</div>
<div class="t" style="left:302px;top:1px;color:#2aa1b3">1</div>
<div class="t" style="left:310px;top:1px;color:#c4e5f8">452</div>
<div class="t" style="left:342px;top:1px;color:#c4e5f8">S</div>
<div class="t" style="left:366px;top:1px;color:#c4e5f8">0.0</div>
<div class="t" style="left:406px;top:1px;color:#c4e5f8">0.0</div>
<div class="t" style="left:446px;top:1px;color:#c4e5f8">0:00.19</div>
<div class="t" style="left:510px;top:1px;color:#c4e5f8">/usr/libexec/boltd</div>
</div>
<div class="r" style="top:430px;">
<div class="t" style="left:6px;top:1px;color:#c4e5f8"> 1423</div>
<div class="t g" style="left:54px;top:1px;color:#5f5d65">root</div>
<div class="t" style="left:134px;top:1px;color:#c4e5f8"> 20</div>
<div class="t" style="left:166px;top:1px;color:#c4e5f8">  0</div>
<div class="t" style="left:206px;top:1px;color:#2aa1b3">234M</div>
<div class="t" style="left:254px;top:1px;color:#2aa1b3">2</div>
<div class="t" style="left:262px;top:1px;color:#c4e5f8">364</div>
<div class="t" style="left:302px;top:1px;color:#2aa1b3">1</div>
<div class="t" style="left:310px;top:1px;color:#c4e5f8">452</div>
<div class="t" style="left:342px;top:1px;color:#c4e5f8">S</div>
<div class="t" style="left:366px;top:1px;color:#c4e5f8">0.0</div>
<div class="t" style="left:406px;top:1px;color:#c4e5f8">0.0</div>
<div class="t" style="left:446px;top:1px;color:#c4e5f8">0:00.00</div>
<div class="t" style="left:510px;top:1px;color:#26a269">/usr/libexec/boltd</div>
</div>
<div class="r" style="top:448px;">
<div class="t" style="left:6px;top:1px;color:#c4e5f8"> 1425</div>
<div class="t g" style="left:54px;top:1px;color:#5f5d65">root</div>
<div class="t" style="left:134px;top:1px;color:#c4e5f8"> 20</div>
<div class="t" style="left:166px;top:1px;color:#c4e5f8">  0</div>
<div class="t" style="left:206px;top:1px;color:#2aa1b3">234M</div>
<div class="t" style="left:254px;top:1px;color:#2aa1b3">2</div>
<div class="t" style="left:262px;top:1px;color:#c4e5f8">364</div>
<div class="t" style="left:302px;top:1px;color:#2aa1b3">1</div>
<div class="t" style="left:310px;top:1px;color:#c4e5f8">452</div>
<div class="t" style="left:342px;top:1px;color:#c4e5f8">S</div>
<div class="t" style="left:366px;top:1px;color:#c4e5f8">0.0</div>
<div class="t" style="left:406px;top:1px;color:#c4e5f8">0.0</div>
<div class="t" style="left:446px;top:1px;color:#c4e5f8">0:00.00</div>
<div class="t" style="left:510px;top:1px;color:#26a269">/usr/libexec/boltd</div>
</div>
<div class="r" style="top:466px;">
<div class="t" style="left:6px;top:1px;color:#c4e5f8"> 1454</div>
<div class="t g" style="left:54px;top:1px;color:#5f5d65">root</div>
<div class="t" style="left:134px;top:1px;color:#c4e5f8"> 20</div>
<div class="t" style="left:166px;top:1px;color:#c4e5f8">  0</div>
<div class="t" style="left:206px;top:1px;color:#2aa1b3">384M</div>
<div class="t" style="left:254px;top:1px;color:#2aa1b3">7</div>
<div class="t" style="left:262px;top:1px;color:#c4e5f8">248</div>
<div class="t" style="left:302px;top:1px;color:#2aa1b3">4</div>
<div class="t" style="left:310px;top:1px;color:#c4e5f8">048</div>
<div class="t" style="left:342px;top:1px;color:#c4e5f8">S</div>
<div class="t" style="left:366px;top:1px;color:#c4e5f8">0.0</div>
<div class="t" style="left:406px;top:1px;color:#c4e5f8">0.0</div>
<div class="t" style="left:446px;top:1px;color:#c4e5f8">0:00.00</div>
<div class="t" style="left:510px;top:1px;color:#26a269">/usr/libexec/udisks2/udisksd</div>
</div>
<div class="r" style="top:484px;">
<div class="t" style="left:6px;top:1px;color:#c4e5f8"> 1455</div>
<div class="t g" style="left:54px;top:1px;color:#5f5d65">root</div>
<div class="t" style="left:134px;top:1px;color:#c4e5f8"> 20</div>
<div class="t" style="left:166px;top:1px;color:#c4e5f8">  0</div>
<div class="t" style="left:206px;top:1px;color:#2aa1b3">238M</div>
<div class="t" style="left:254px;top:1px;color:#2aa1b3">2</div>
<div class="t" style="left:262px;top:1px;color:#c4e5f8">952</div>
<div class="t" style="left:310px;top:1px;color:#c4e5f8">972</div>
<div class="t" style="left:342px;top:1px;color:#c4e5f8">S</div>
<div class="t" style="left:366px;top:1px;color:#c4e5f8">0.0</div>
<div class="t" style="left:406px;top:1px;color:#c4e5f8">0.0</div>
<div class="t" style="left:446px;top:1px;color:#c4e5f8">0:00.00</div>
<div class="t" style="left:510px;top:1px;color:#26a269">/usr/sbin/ModemManager</div>
</div>
<div class="r" style="top:502px;">
<div class="t" style="left:6px;top:1px;color:#c4e5f8"> 1458</div>
<div class="t g" style="left:54px;top:1px;color:#5f5d65">root</div>
<div class="t" style="left:134px;top:1px;color:#c4e5f8"> 20</div>
<div class="t" style="left:166px;top:1px;color:#c4e5f8">  0</div>
<div class="t" style="left:206px;top:1px;color:#2aa1b3">238M</div>
<div class="t" style="left:254px;top:1px;color:#2aa1b3">2</div>
<div class="t" style="left:262px;top:1px;color:#c4e5f8">952</div>
<div class="t" style="left:310px;top:1px;color:#c4e5f8">972</div>
<div class="t" style="left:342px;top:1px;color:#c4e5f8">S</div>
<div class="t" style="left:366px;top:1px;color:#c4e5f8">0.0</div>
<div class="t" style="left:406px;top:1px;color:#c4e5f8">0.0</div>
<div class="t" style="left:446px;top:1px;color:#c4e5f8">0:00.00</div>
<div class="t" style="left:510px;top:1px;color:#26a269">/usr/sbin/ModemManager</div>
</div>
<div class="r" style="top:520px;">
<div class="t" style="left:6px;top:1px;color:#c4e5f8"> 1464</div>
<div class="t g" style="left:54px;top:1px;color:#5f5d65">root</div>
<div class="t" style="left:134px;top:1px;color:#c4e5f8"> 20</div>
<div class="t" style="left:166px;top:1px;color:#c4e5f8">  0</div>
<div class="t" style="left:206px;top:1px;color:#2aa1b3">235M</div>
<div class="t" style="left:254px;top:1px;color:#2aa1b3">2</div>
<div class="t" style="left:262px;top:1px;color:#c4e5f8">396</div>
<div class="t" style="left:302px;top:1px;color:#2aa1b3">1</div>
<div class="t" style="left:310px;top:1px;color:#c4e5f8">212</div>
<div class="t" style="left:342px;top:1px;color:#c4e5f8">S</div>
<div class="t" style="left:366px;top:1px;color:#c4e5f8">0.0</div>
<div class="t" style="left:406px;top:1px;color:#c4e5f8">0.0</div>
<div class="t" style="left:446px;top:1px;color:#c4e5f8">0:00.02</div>
<div class="t" style="left:510px;top:1px;color:#c4e5f8">/usr/sbin/gdm3</div>
</div>
<div class="r" style="top:538px;">
<div class="t" style="left:6px;top:1px;color:#c4e5f8"> 1473</div>
<div class="t g" style="left:54px;top:1px;color:#5f5d65">root</div>
<div class="t" style="left:134px;top:1px;color:#c4e5f8"> 20</div>
<div class="t" style="left:166px;top:1px;color:#c4e5f8">  0</div>
<div class="t" style="left:206px;top:1px;color:#2aa1b3">384M</div>
<div class="t" style="left:254px;top:1px;color:#2aa1b3">7</div>
<div class="t" style="left:262px;top:1px;color:#c4e5f8">248</div>
<div class="t" style="left:302px;top:1px;color:#2aa1b3">4</div>
<div class="t" style="left:310px;top:1px;color:#c4e5f8">048</div>
<div class="t" style="left:342px;top:1px;color:#c4e5f8">S</div>
<div class="t" style="left:366px;top:1px;color:#c4e5f8">0.0</div>
<div class="t" style="left:406px;top:1px;color:#c4e5f8">0.0</div>
<div class="t" style="left:446px;top:1px;color:#c4e5f8">0:00.00</div>
<div class="t" style="left:510px;top:1px;color:#26a269">/usr/libexec/udisks2/udisksd</div>
</div>
<div class="r" style="top:556px;">
<div class="t" style="left:6px;top:1px;color:#c4e5f8"> 1477</div>
<div class="t g" style="left:54px;top:1px;color:#5f5d65">root</div>
<div class="t" style="left:134px;top:1px;color:#c4e5f8"> 20</div>
<div class="t" style="left:166px;top:1px;color:#c4e5f8">  0</div>
<div class="t" style="left:206px;top:1px;color:#2aa1b3">235M</div>
<div class="t" style="left:254px;top:1px;color:#2aa1b3">2</div>
<div class="t" style="left:262px;top:1px;color:#c4e5f8">396</div>
<div class="t" style="left:302px;top:1px;color:#2aa1b3">1</div>
<div class="t" style="left:310px;top:1px;color:#c4e5f8">212</div>
<div class="t" style="left:342px;top:1px;color:#c4e5f8">S</div>
<div class="t" style="left:366px;top:1px;color:#c4e5f8">0.0</div>
<div class="t" style="left:406px;top:1px;color:#c4e5f8">0.0</div>
<div class="t" style="left:446px;top:1px;color:#c4e5f8">0:00.00</div>
<div class="t" style="left:510px;top:1px;color:#26a269">/usr/sbin/gdm3</div>
</div>
<div class="r" style="top:574px;">
<div class="t" style="left:6px;top:1px;color:#c4e5f8"> 1479</div>
<div class="t g" style="left:54px;top:1px;color:#5f5d65">root</div>
<div class="t" style="left:134px;top:1px;color:#c4e5f8"> 20</div>
<div class="t" style="left:166px;top:1px;color:#c4e5f8">  0</div>
<div class="t" style="left:206px;top:1px;color:#2aa1b3">235M</div>
<div class="t" style="left:254px;top:1px;color:#2aa1b3">2</div>
<div class="t" style="left:262px;top:1px;color:#c4e5f8">396</div>
<div class="t" style="left:302px;top:1px;color:#2aa1b3">1</div>
<div class="t" style="left:310px;top:1px;color:#c4e5f8">212</div>
<div class="t" style="left:342px;top:1px;color:#c4e5f8">S</div>
<div class="t" style="left:366px;top:1px;color:#c4e5f8">0.0</div>
<div class="t" style="left:406px;top:1px;color:#c4e5f8">0.0</div>
<div class="t" style="left:446px;top:1px;color:#c4e5f8">0:00.00</div>
<div class="t" style="left:510px;top:1px;color:#26a269">/usr/sbin/gdm3</div>
</div>
<div class="r" style="top:592px;">
<div class="t" style="left:6px;top:1px;color:#c4e5f8"> 1481</div>
<div class="t g" style="left:54px;top:1px;color:#5f5d65">colord</div>
<div class="t" style="left:134px;top:1px;color:#c4e5f8"> 20</div>
<div class="t" style="left:166px;top:1px;color:#c4e5f8">  0</div>
<div class="t" style="left:206px;top:1px;color:#2aa1b3">239M</div>
<div class="t" style="left:254px;top:1px;color:#2aa1b3">4</div>
<div class="t" style="left:262px;top:1px;color:#c4e5f8">376</div>
<div class="t" style="left:302px;top:1px;color:#2aa1b3">1</div>
<div class="t" style="left:310px;top:1px;color:#c4e5f8">280</div>
<div class="t" style="left:342px;top:1px;color:#c4e5f8">S</div>
<div class="t" style="left:366px;top:1px;color:#c4e5f8">0.0</div>
<div class="t" style="left:406px;top:1px;color:#c4e5f8">0.0</div>
<div class="t" style="left:446px;top:1px;color:#c4e5f8">0:00.12</div>
<div class="t" style="left:510px;top:1px;color:#c4e5f8">/usr/libexec/colord</div>
</div>
<div class="r" style="top:610px;">
<div class="t" style="left:6px;top:1px;color:#c4e5f8"> 1486</div>
<div class="t g" style="left:54px;top:1px;color:#5f5d65">root</div>
<div class="t" style="left:134px;top:1px;color:#c4e5f8"> 20</div>
<div class="t" style="left:166px;top:1px;color:#c4e5f8">  0</div>
<div class="t" style="left:206px;top:1px;color:#2aa1b3">115M</div>
<div class="t" style="left:246px;top:1px;color:#2aa1b3">10</div>
<div class="t" style="left:262px;top:1px;color:#c4e5f8">028</div>
<div class="t" style="left:302px;top:1px;color:#2aa1b3">1</div>
<div class="t" style="left:310px;top:1px;color:#c4e5f8">240</div>
<div class="t" style="left:342px;top:1px;color:#c4e5f8">S</div>
<div class="t" style="left:366px;top:1px;color:#c4e5f8">0.0</div>
<div class="t" style="left:406px;top:1px;color:#c4e5f8">0.1</div>
<div class="t" style="left:446px;top:1px;color:#c4e5f8">0:00.00</div>
<div class="t" style="left:510px;top:1px;color:#26a269">/usr/bin/python3 /usr/share/unattended-upgrades/unattended-upgrade-shutdown --wait-for-signal</div>
</div>
<div class="r" style="top:628px;">
<div class="t" style="left:6px;top:1px;color:#c4e5f8"> 1487</div>
<div class="t g" style="left:54px;top:1px;color:#5f5d65">colord</div>
<div class="t" style="left:134px;top:1px;color:#c4e5f8"> 20</div>
<div class="t" style="left:166px;top:1px;color:#c4e5f8">  0</div>
<div class="t" style="left:206px;top:1px;color:#2aa1b3">239M</div>
<div class="t" style="left:254px;top:1px;color:#2aa1b3">4</div>
<div class="t" style="left:262px;top:1px;color:#c4e5f8">376</div>
<div class="t" style="left:302px;top:1px;color:#2aa1b3">1</div>
<div class="t" style="left:310px;top:1px;color:#c4e5f8">280</div>
<div class="t" style="left:342px;top:1px;color:#c4e5f8">S</div>
<div class="t" style="left:366px;top:1px;color:#c4e5f8">0.0</div>
<div class="t" style="left:406px;top:1px;color:#c4e5f8">0.0</div>
<div class="t" style="left:446px;top:1px;color:#c4e5f8">0:00.00</div>
<div class="t" style="left:510px;top:1px;color:#26a269">/usr/libexec/colord</div>
</div>
<div class="r" style="top:646px;">
<div class="t" style="left:6px;top:1px;color:#c4e5f8"> 1489</div>
<div class="t g" style="left:54px;top:1px;color:#5f5d65">colord</div>
<div class="t" style="left:134px;top:1px;color:#c4e5f8"> 20</div>
<div class="t" style="left:166px;top:1px;color:#c4e5f8">  0</div>
<div class="t" style="left:206px;top:1px;color:#2aa1b3">239M</div>
<div class="t" style="left:254px;top:1px;color:#2aa1b3">4</div>
<div class="t" style="left:262px;top:1px;color:#c4e5f8">376</div>
<div class="t" style="left:302px;top:1px;color:#2aa1b3">1</div>
<div class="t" style="left:310px;top:1px;color:#c4e5f8">280</div>
<div class="t" style="left:342px;top:1px;color:#c4e5f8">S</div>
<div class="t" style="left:366px;top:1px;color:#c4e5f8">0.0</div>
<div class="t" style="left:406px;top:1px;color:#c4e5f8">0.0</div>
<div class="t" style="left:446px;top:1px;color:#c4e5f8">0:00.01</div>
<div class="t" style="left:510px;top:1px;color:#26a269">/usr/libexec/colord</div>
</div>
<div class="r" style="top:664px;">
<div class="t" style="left:6px;top:1px;color:#c4e5f8"> 1491</div>
<div class="t g" style="left:54px;top:1px;color:#5f5d65">kernoops</div>
<div class="t" style="left:134px;top:1px;color:#c4e5f8"> 20</div>
<div class="t" style="left:166px;top:1px;color:#c4e5f8">  0</div>
<div class="t" style="left:198px;top:1px;color:#2aa1b3">13</div>
<div class="t" style="left:214px;top:1px;color:#c4e5f8">104</div>
<div class="t" style="left:254px;top:1px;color:#2aa1b3">1</div>
<div class="t" style="left:262px;top:1px;color:#c4e5f8">232</div>
<div class="t" style="left:310px;top:1px;color:#c4e5f8">748</div>
<div class="t" style="left:342px;top:1px;color:#c4e5f8">S</div>
<div class="t" style="left:366px;top:1px;color:#c4e5f8">0.0</div>
<div class="t" style="left:406px;top:1px;color:#c4e5f8">0.0</div>
<div class="t" style="left:446px;top:1px;color:#c4e5f8">0:00.01</div>
<div class="t" style="left:510px;top:1px;color:#c4e5f8">/usr/sbin/kerneloops --test</div>
</div>
<div class="r" style="top:682px;">
<div class="t" style="left:6px;top:1px;color:#c4e5f8"> 1493</div>
<div class="t g" style="left:54px;top:1px;color:#5f5d65">kernoops</div>
<div class="t" style="left:134px;top:1px;color:#c4e5f8"> 20</div>
<div class="t" style="left:166px;top:1px;color:#c4e5f8">  0</div>
<div class="t" style="left:198px;top:1px;color:#2aa1b3">13</div>
<div class="t" style="left:214px;top:1px;color:#c4e5f8">104</div>
<div class="t" style="left:254px;top:1px;color:#2aa1b3">1</div>
<div class="t" style="left:262px;top:1px;color:#c4e5f8">240</div>
<div class="t" style="left:310px;top:1px;color:#c4e5f8">760</div>
<div class="t" style="left:342px;top:1px;color:#c4e5f8">S</div>
<div class="t" style="left:366px;top:1px;color:#c4e5f8">0.0</div>
<div class="t" style="left:406px;top:1px;color:#c4e5f8">0.0</div>
<div class="t" style="left:446px;top:1px;color:#c4e5f8">0:00.02</div>
<div class="t" style="left:510px;top:1px;color:#c4e5f8">/usr/sbin/kerneloops</div>
</div>
<div class="r" style="top:700px;">
<div class="t" style="left:6px;top:1px;color:#c4e5f8"> 3307</div>
<div class="t g" style="left:54px;top:1px;color:#5f5d65">root</div>
<div class="t" style="left:134px;top:1px;color:#c4e5f8"> 20</div>
<div class="t" style="left:166px;top:1px;color:#c4e5f8">  0</div>
<div class="t" style="left:198px;top:1px;color:#26a269">2</div>
<div class="t" style="left:206px;top:1px;color:#2aa1b3">817M</div>
<div class="t" style="left:246px;top:1px;color:#2aa1b3">33</div>
<div class="t" style="left:262px;top:1px;color:#c4e5f8">528</div>
<div class="t" style="left:294px;top:1px;color:#2aa1b3">11</div>
<div class="t" style="left:310px;top:1px;color:#c4e5f8">444</div>
<div class="t" style="left:342px;top:1px;color:#c4e5f8">S</div>
<div class="t" style="left:366px;top:1px;color:#c4e5f8">0.0</div>
<div class="t" style="left:406px;top:1px;color:#c4e5f8">0.2</div>
<div class="t" style="left:446px;top:1px;color:#c4e5f8">0:00.46</div>
<div class="t" style="left:510px;top:1px;color:#26a269">/snap/snapd/current/usr/lib/snapd/snapd</div>
</div>
<div class="r" style="top:718px;">
<div class="t" style="left:6px;top:1px;color:#c4e5f8"> 3314</div>
<div class="t g" style="left:54px;top:1px;color:#5f5d65">root</div>
<div class="t" style="left:134px;top:1px;color:#c4e5f8"> 20</div>
<div class="t" style="left:166px;top:1px;color:#c4e5f8">  0</div>
<div class="t" style="left:198px;top:1px;color:#26a269">2</div>
<div class="t" style="left:206px;top:1px;color:#2aa1b3">817M</div>
<div class="t" style="left:246px;top:1px;color:#2aa1b3">33</div>
<div class="t" style="left:262px;top:1px;color:#c4e5f8">528</div>
<div class="t" style="left:294px;top:1px;color:#2aa1b3">11</div>
<div class="t" style="left:310px;top:1px;color:#c4e5f8">444</div>
<div class="t" style="left:342px;top:1px;color:#c4e5f8">S</div>
<div class="t" style="left:366px;top:1px;color:#c4e5f8">0.0</div>
<div class="t" style="left:406px;top:1px;color:#c4e5f8">0.2</div>
<div class="t" style="left:446px;top:1px;color:#c4e5f8">0:00.23</div>
<div class="t" style="left:510px;top:1px;color:#26a269">/snap/snapd/current/usr/lib/snapd/snapd</div>
</div>
<div class="r" style="top:736px;">
<div class="t" style="left:6px;top:1px;color:#c4e5f8"> 3315</div>
<div class="t g" style="left:54px;top:1px;color:#5f5d65">root</div>
<div class="t" style="left:134px;top:1px;color:#c4e5f8"> 20</div>
<div class="t" style="left:166px;top:1px;color:#c4e5f8">  0</div>
<div class="t" style="left:198px;top:1px;color:#26a269">2</div>
<div class="t" style="left:206px;top:1px;color:#2aa1b3">817M</div>
<div class="t" style="left:246px;top:1px;color:#2aa1b3">33</div>
<div class="t" style="left:262px;top:1px;color:#c4e5f8">528</div>
<div class="t" style="left:294px;top:1px;color:#2aa1b3">11</div>
<div class="t" style="left:310px;top:1px;color:#c4e5f8">444</div>
<div class="t" style="left:342px;top:1px;color:#c4e5f8">S</div>
<div class="t" style="left:366px;top:1px;color:#c4e5f8">0.0</div>
<div class="t" style="left:406px;top:1px;color:#c4e5f8">0.2</div>
<div class="t" style="left:446px;top:1px;color:#c4e5f8">0:00.29</div>
<div class="t" style="left:510px;top:1px;color:#26a269">/snap/snapd/current/usr/lib/snapd/snapd</div>
</div>
</div></body></html>
